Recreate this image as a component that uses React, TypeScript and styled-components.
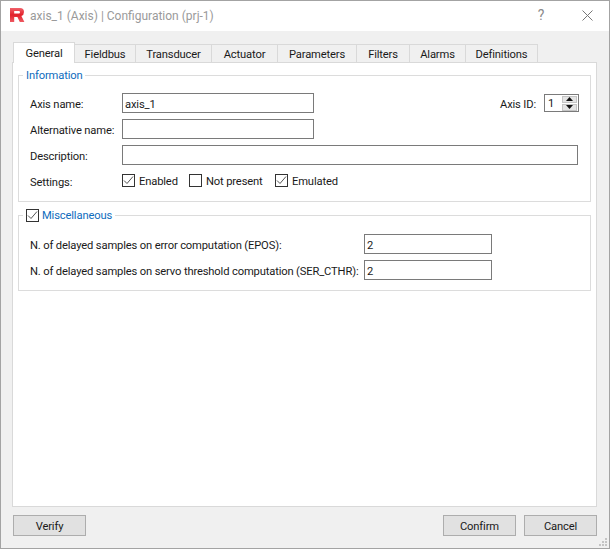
import styled, { createGlobalStyle } from "styled-components";

const Global = createGlobalStyle`
  html, body {
    margin: 0;
    padding: 0;
    background: #f0f0f0;
  }
  * {
    box-sizing: border-box;
  }
`;

const Window = styled.div`
  position: relative;
  width: 610px;
  height: 549px;
  display: flex;
  flex-direction: column;
  background: #f0f0f0;
  border: 1px solid #a3a3a3;
  font-family: Roboto, "Noto Sans", sans-serif;
  font-size: 11.2px;
  letter-spacing: -0.15px;
  color: #1a1a1a;
  overflow: hidden;
`;

const TitleBar = styled.div`
  height: 30px;
  flex: none;
  display: flex;
  align-items: center;
  background: #fff;
  padding-left: 8px;
`;

const LogoMark = styled.svg`
  margin-bottom: 2px;
`;

const Title = styled.span`
  margin-left: 5px;
  font-size: 12px;
  letter-spacing: 0;
  color: #9a9a9a;
  flex: 1;
`;

const HelpMark = styled.span`
  width: 46px;
  margin-bottom: 2px;
  text-align: center;
  font-size: 14px;
  color: #8a8a8a;
`;

const CloseBox = styled.span`
  width: 46px;
  margin-right: -1px;
  margin-bottom: 2px;
  display: flex;
  justify-content: center;
`;

const Body = styled.div`
  flex: 1;
  display: flex;
  flex-direction: column;
  padding: 11px 12px 11px 11px;
`;

const TabBar = styled.div`
  display: flex;
  align-items: flex-end;
  height: 21px;
  padding-left: 1px;
  margin-bottom: -1px;
  position: relative;
  z-index: 1;
`;

const Tab = styled.div<{ $w: number; $active?: boolean }>`
  width: ${(p) => p.$w}px;
  height: ${(p) => (p.$active ? 21 : 19)}px;
  display: flex;
  align-items: center;
  justify-content: center;
  background: ${(p) => (p.$active ? "#fff" : "#f0f0f0")};
  border: 1px solid #d9d9d9;
  border-left-width: ${(p) => (p.$active ? 1 : 0)}px;
  border-bottom: ${(p) => (p.$active ? "none" : "1px solid #d9d9d9")};
  padding-top: ${(p) => (p.$active ? 0 : 2)}px;
`;

const Pane = styled.div`
  flex: 1;
  display: flex;
  flex-direction: column;
  gap: 6px;
  background: #fff;
  border: 1px solid #d9d9d9;
  padding: 5px 5px 0;
`;

const Group = styled.fieldset<{ $h: number }>`
  height: ${(p) => p.$h}px;
  margin: 0;
  padding: 0 11px 0 11px;
  border: 1px solid #dcdcdc;
  min-width: 0;
`;

const Legend = styled.legend`
  margin-left: -7px;
  padding: 0 3px;
  height: 14px;
  color: #0f6cbd;
  display: flex;
  align-items: center;
  gap: 3px;
`;

const LegendText = styled.span`
  padding-top: 2px;
  line-height: 12px;
`;

const Row = styled.div`
  display: flex;
  align-items: center;
  height: 20px;
  margin-bottom: 6px;
`;

const FirstRows = styled.div`
  padding-top: 11px;
`;

const MiscRows = styled.div`
  padding-top: 12px;
`;

const Label = styled.span<{ $w?: number }>`
  width: ${(p) => (p.$w ? `${p.$w}px` : "auto")};
  flex: none;
  padding-top: 2px;
  white-space: nowrap;
`;

const Field = styled.div<{ $w: number }>`
  width: ${(p) => p.$w}px;
  height: 20px;
  flex: none;
  display: flex;
  align-items: center;
  padding: 2px 0 0 2px;
  background: #fff;
  border: 1px solid #7a7a7a;
`;

const AxisId = styled.div`
  margin-left: auto;
  display: flex;
  align-items: center;
  gap: 8px;
`;

const Spin = styled.div`
  width: 35px;
  height: 18px;
  display: flex;
  align-items: center;
  justify-content: space-between;
  padding: 0 1px 0 3px;
  border: 1px solid #7a7a7a;
  background: #fff;
`;

const SpinButtons = styled.div`
  width: 15px;
  height: 15px;
  display: flex;
  flex-direction: column;
  gap: 1px;
`;

const SpinButton = styled.div`
  flex: 1;
  display: flex;
  align-items: center;
  justify-content: center;
  background: #e4e4e4;
  border: 1px solid #c4c4c4;
`;

const Settings = styled.div`
  margin-top: -1px;
  display: flex;
  align-items: center;
`;

const CheckItem = styled.span<{ $w: number }>`
  width: ${(p) => p.$w}px;
  display: flex;
  align-items: center;
  gap: 4px;
`;

const Box = styled.span`
  width: 13px;
  height: 13px;
  flex: none;
  display: flex;
  align-items: center;
  justify-content: center;
  background: #fff;
  border: 1px solid #333;
`;

const Footer = styled.div`
  height: 30px;
  flex: none;
  display: flex;
  justify-content: space-between;
  align-items: flex-end;
  padding: 0 0 1px 1px;
`;

const Actions = styled.div`
  display: flex;
  gap: 8px;
`;

const Button = styled.div`
  width: 73px;
  height: 21px;
  display: flex;
  align-items: center;
  justify-content: center;
  padding-top: 2px;
  background: #e1e1e1;
  border: 1px solid #adadad;
`;

const Grip = styled.svg`
  position: absolute;
  right: 1px;
  bottom: 1px;
`;

const tabs = [
  { name: "General", w: 62 },
  { name: "Fieldbus", w: 61 },
  { name: "Transducer", w: 76 },
  { name: "Actuator", w: 66 },
  { name: "Parameters", w: 79 },
  { name: "Filters", w: 53 },
  { name: "Alarms", w: 56 },
  { name: "Definitions", w: 72 },
];

function Check({ on }: { on?: boolean }) {
  return (
    <Box>
      {on ? (
        <svg width="11" height="11" viewBox="0 0 11 11">
          <path d="M1 5.5 L4 8.5 L10 1.5" fill="none" stroke="#555" strokeWidth="1" />
        </svg>
      ) : null}
    </Box>
  );
}

function Logo() {
  return (
    <LogoMark width="16" height="16" viewBox="0 0 16 16">
      <defs>
        <linearGradient id="logoRed" x1="0" y1="0" x2="0" y2="1">
          <stop offset="0" stopColor="#f0616a" />
          <stop offset="0.5" stopColor="#e2202a" />
          <stop offset="1" stopColor="#ee5a62" />
        </linearGradient>
      </defs>
      <path
        d="M1 1 H11 Q15 1 15 5 Q15 8 12.4 9 L15.4 15 H10.8 L8.4 10 H5.2 V15 H1 Z M5.2 4 V6.6 H9.8 Q11 6.6 11 5.3 Q11 4 9.8 4 Z"
        fill="url(#logoRed)"
        fillRule="evenodd"
      />
    </LogoMark>
  );
}

export default function App() {
  return (
    <>
      <Global />
      <Window>
        <TitleBar>
          <Logo />
          <Title>axis_1 (Axis) | Configuration (prj-1)</Title>
          <HelpMark>?</HelpMark>
          <CloseBox>
            <svg width="11" height="11" viewBox="0 0 11 11">
              <path d="M0.5 0.5 L10.5 10.5 M10.5 0.5 L0.5 10.5" stroke="#777" strokeWidth="1" />
            </svg>
          </CloseBox>
        </TitleBar>
        <Body>
          <TabBar>
            {tabs.map((tab, i) => (
              <Tab key={tab.name} $w={tab.w} $active={i === 0}>
                {tab.name}
              </Tab>
            ))}
          </TabBar>
          <Pane>
            <Group $h={134}>
              <Legend>
                <LegendText>Information</LegendText>
              </Legend>
              <FirstRows>
                <Row>
                  <Label $w={92}>Axis name:</Label>
                  <Field $w={192}>axis_1</Field>
                  <AxisId>
                    <Label>Axis ID:</Label>
                    <Spin>
                      1
                      <SpinButtons>
                        <SpinButton>
                          <svg width="7" height="4" viewBox="0 0 7 4">
                            <path d="M3.5 0 L7 4 H0 Z" fill="#111" />
                          </svg>
                        </SpinButton>
                        <SpinButton>
                          <svg width="7" height="4" viewBox="0 0 7 4">
                            <path d="M0 0 H7 L3.5 4 Z" fill="#111" />
                          </svg>
                        </SpinButton>
                      </SpinButtons>
                    </Spin>
                  </AxisId>
                </Row>
                <Row>
                  <Label $w={92}>Alternative name:</Label>
                  <Field $w={192} />
                </Row>
                <Row>
                  <Label $w={92}>Description:</Label>
                  <Field $w={456} />
                </Row>
                <Row>
                  <Label $w={92}>Settings:</Label>
                  <Settings>
                    <CheckItem $w={67}>
                      <Check on />
                      <Label>Enabled</Label>
                    </CheckItem>
                    <CheckItem $w={86}>
                      <Check />
                      <Label>Not present</Label>
                    </CheckItem>
                    <CheckItem $w={70}>
                      <Check on />
                      <Label>Emulated</Label>
                    </CheckItem>
                  </Settings>
                </Row>
              </FirstRows>
            </Group>
            <Group $h={83}>
              <Legend>
                <Check on />
                <LegendText>Miscellaneous</LegendText>
              </Legend>
              <MiscRows>
                <Row>
                  <Label $w={334}>N. of delayed samples on error computation (EPOS):</Label>
                  <Field $w={128}>2</Field>
                </Row>
                <Row>
                  <Label $w={334}>N. of delayed samples on servo threshold computation (SER_CTHR):</Label>
                  <Field $w={128}>2</Field>
                </Row>
              </MiscRows>
            </Group>
          </Pane>
          <Footer>
            <Button>Verify</Button>
            <Actions>
              <Button>Confirm</Button>
              <Button>Cancel</Button>
            </Actions>
          </Footer>
        </Body>
        <Grip width="10" height="10" viewBox="0 0 10 10">
          <path d="M7 1h2v2H7zM4 4h2v2H4zM7 4h2v2H7zM1 7h2v2H1zM4 7h2v2H4zM7 7h2v2H7z" fill="#c4c4c4" />
        </Grip>
      </Window>
    </>
  );
}
